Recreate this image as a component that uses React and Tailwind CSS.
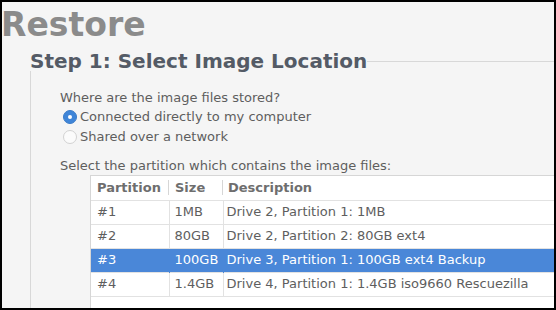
import React, { useState } from "react";

const partitions = [
  { id: "#1", size: "1MB", desc: "Drive 2, Partition 1: 1MB" },
  { id: "#2", size: "80GB", desc: "Drive 2, Partition 2: 80GB ext4" },
  { id: "#3", size: "100GB", desc: "Drive 3, Partition 1: 100GB ext4 Backup" },
  { id: "#4", size: "1.4GB", desc: "Drive 4, Partition 1: 1.4GB iso9660 Rescuezilla" },
];

function Radio({ checked, label, onClick }) {
  return (
    <div onClick={onClick} className="flex items-center h-[20px] ml-[3px] gap-[3px] cursor-default">
      {checked ? (
        <span className="w-[14px] h-[14px] rounded-full bg-[#3f85d8] border border-[#3a7bc8] flex items-center justify-center">
          <span className="w-[4px] h-[4px] rounded-full bg-white" />
        </span>
      ) : (
        <span className="w-[14px] h-[14px] rounded-full bg-[#fbfbfb] border border-[#d2d2d2]" />
      )}
      <span className="leading-[20px]">{label}</span>
    </div>
  );
}

export default function App() {
  const [source, setSource] = useState("local");
  const [selected, setSelected] = useState(2);

  return (
    <div className="w-[556px] h-[310px] border-2 border-black bg-[#f5f5f5] overflow-hidden flex flex-col font-['DejaVu_Sans',sans-serif] text-[13px] text-[#5e5e5e]">
      {/* title */}
      <h1 className="mt-[6px] -ml-[1px] text-[33px] leading-none font-bold text-[#8b8b8b]">Restore</h1>

      {/* step heading with frame line */}
      <div className="mt-[10px] ml-[28px] flex items-center h-[20px]">
        <h2 className="text-[20px] leading-none font-bold text-[#545b66] whitespace-nowrap">
          Step 1: Select Image Location
        </h2>
        <div className="flex-1 h-px bg-[#d8d8d8]" />
      </div>

      {/* frame body */}
      <div className="ml-[28px] flex-1 border-l border-[#d8d8d8] pl-[29px] pt-[17px] flex flex-col">
        <p className="leading-[19px] whitespace-nowrap">Where are the image files stored?</p>
        <Radio
          checked={source === "local"}
          label="Connected directly to my computer"
          onClick={() => setSource("local")}
        />
        <Radio
          checked={source === "network"}
          label="Shared over a network"
          onClick={() => setSource("network")}
        />

        <p className="mt-[10px] leading-[18px] whitespace-nowrap">
          Select the partition which contains the image files:
        </p>

        {/* partition table */}
        <div className="ml-[30px] flex-1 bg-white border-t border-l border-[#d6d6d6] overflow-hidden">
          <table className="w-[600px] border-collapse text-left">
            <thead>
              <tr className="h-[24px] border-b border-[#e2e2e2] text-[#6e6e6e]">
                <th className="w-[78px] p-0 pl-[6px] font-bold">
                  <div className="flex items-center justify-between">
                    Partition
                    <span className="w-px h-[15px] bg-[#d6d6d6]" />
                  </div>
                </th>
                <th className="w-[54px] p-0 pl-[6px] font-bold">
                  <div className="flex items-center justify-between">
                    Size
                    <span className="w-px h-[15px] bg-[#d6d6d6]" />
                  </div>
                </th>
                <th className="p-0 pl-[5px] font-bold">Description</th>
              </tr>
            </thead>
            <tbody>
              {partitions.map((p, i) => {
                const sel = i === selected;
                return (
                  <tr
                    key={p.id}
                    onClick={() => setSelected(i)}
                    className={`h-[24px] border-b border-[#e2e2e2] whitespace-nowrap ${
                      sel ? "bg-[#4a87d8] text-white" : "text-[#5e5e5e]"
                    }`}
                  >
                    <td className={`p-0 pl-[6px] border-r ${sel ? "border-[#4a87d8]" : "border-[#e2e2e2]"}`}>{p.id}</td>
                    <td className={`p-0 pl-[5px] border-r ${sel ? "border-[#4a87d8]" : "border-[#e2e2e2]"}`}>{p.size}</td>
                    <td className="p-0 pl-[3px]">{p.desc}</td>
                  </tr>
                );
              })}
            </tbody>
          </table>
        </div>
      </div>
    </div>
  );
}
